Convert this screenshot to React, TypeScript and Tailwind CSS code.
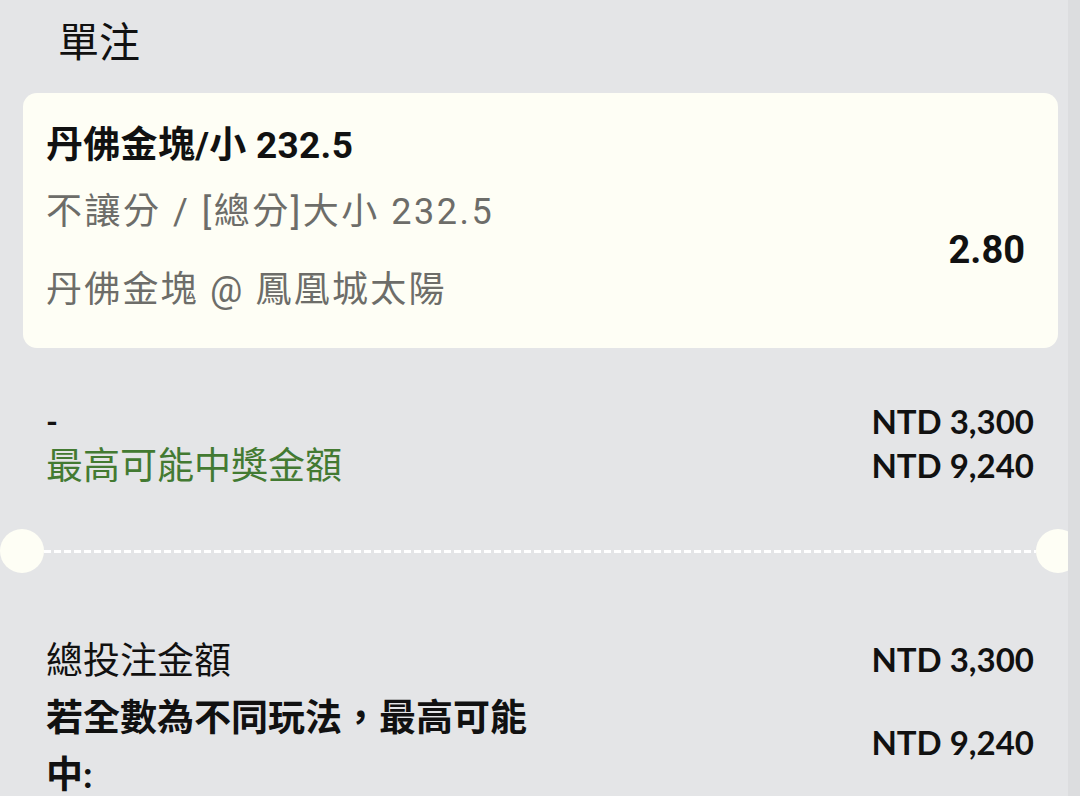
import React from "react";

const font = { fontFamily: 'Lato, "Noto Sans CJK TC", sans-serif' };
const cardFont = { fontFamily: 'Roboto, "Noto Sans CJK TC", sans-serif' };

const Separator = () => (
  <div className="flex items-center h-[44px] mt-[42px]">
    <div className="w-[44px] h-[44px] rounded-full bg-[#fefef5] shrink-0" />
    <div className="flex-1 h-[3px] bg-[repeating-linear-gradient(90deg,#ffffff_0px,#ffffff_7px,transparent_7px,transparent_10px)]" />
    <div className="w-[44px] h-[44px] rounded-full bg-[#fefef5] shrink-0 -mr-[12px]" />
  </div>
);

export default function App() {
  return (
    <div
      className="flex w-[1080px] h-[796px] bg-[#e4e5e7] overflow-hidden text-[#111]"
      style={font}
    >
      <div className="w-[1068px] shrink-0 overflow-hidden">
        {/* header */}
        <div className="h-[84px] flex items-center pl-[58px] text-[41px]">單注</div>

        {/* selection card */}
        <div
          className="ml-[23px] mt-[9px] w-[1035px] h-[255px] rounded-[14px] bg-[#fefef5] pl-[23px] pr-[33px] flex justify-between items-start"
          style={cardFont}
        >
          <div>
            <div className="mt-[31px] leading-[44px] text-[37px] tracking-[0.3px] font-bold">
              丹佛金塊/小 232.5
            </div>
            <div className="mt-[22px] leading-[44px] text-[36px] tracking-[2.5px] text-[#6d6d69]">
              不讓分 / [總分]大小 232.5
            </div>
            <div className="mt-[34px] leading-[44px] text-[36px] tracking-[2.2px] text-[#6d6d69]">
              丹佛金塊 @ 鳳凰城太陽
            </div>
          </div>
          <div className="mt-[135px] leading-[44px] text-[38px] font-bold">2.80</div>
        </div>

        {/* stake / potential win */}
        <div className="mt-[51px] pl-[46px] pr-[34px]">
          <div className="flex justify-between items-center leading-[44px]">
            <span className="text-[32px] font-bold">-</span>
            <span className="text-[33px] font-bold">NTD 3,300</span>
          </div>
          <div className="flex justify-between items-center leading-[44px]">
            <span className="text-[37px] text-[#437a32]">最高可能中獎金額</span>
            <span className="text-[33px] font-bold">NTD 9,240</span>
          </div>
        </div>

        <Separator />

        {/* totals */}
        <div className="mt-[58px] pl-[46px] pr-[34px]">
          <div className="flex justify-between items-center leading-[57px]">
            <span className="text-[37px]">總投注金額</span>
            <span className="text-[33px] font-bold">NTD 3,300</span>
          </div>
          <div className="flex justify-between items-center">
            <span className="w-[520px] text-[37px] font-bold leading-[57px]">
              若全數為不同玩法，最高可能中:
            </span>
            <span className="text-[33px] font-bold leading-[44px] -mt-[6px]">NTD 9,240</span>
          </div>
        </div>
      </div>
      <div className="flex-1 bg-[#dcdddf]" />
    </div>
  );
}
